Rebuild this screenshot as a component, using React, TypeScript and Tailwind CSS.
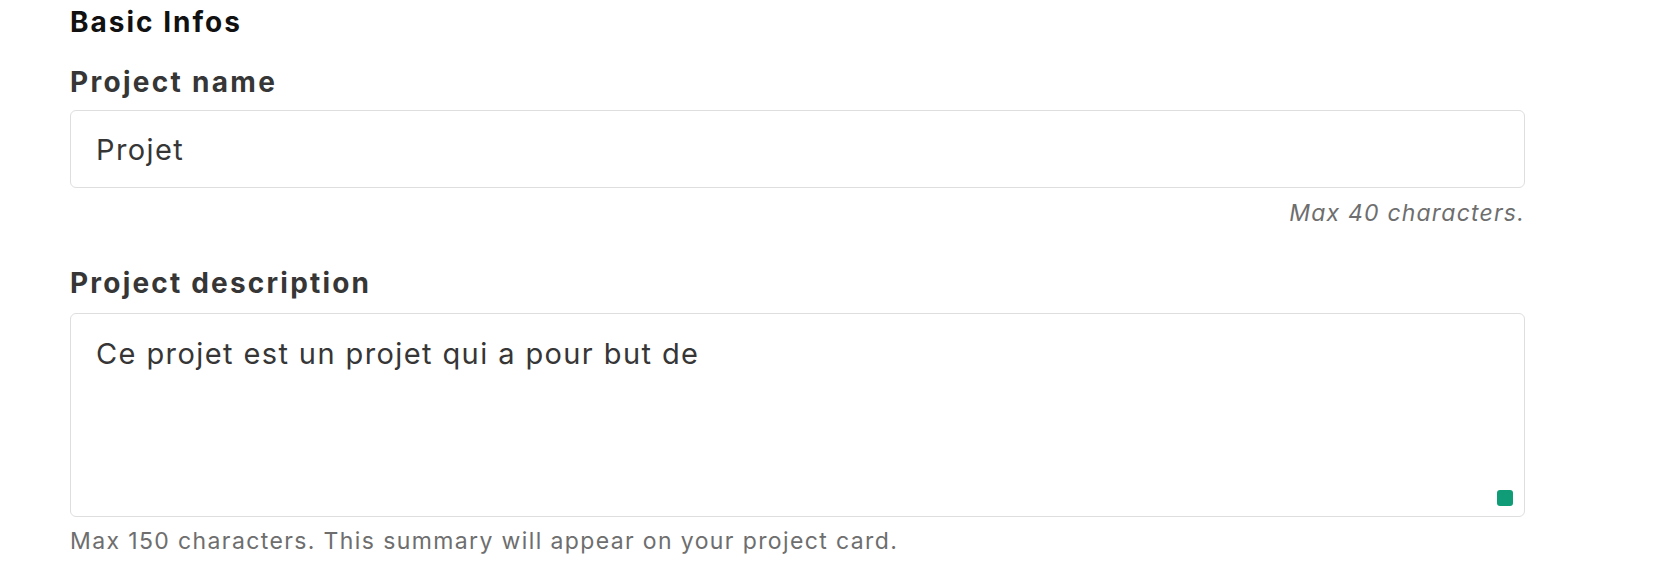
import React from "react";

export default function App() {
  return (
    <div className="min-h-[578px] w-full bg-white font-[family-name:Inter,sans-serif] pl-[70px]">
      <div className="w-[1455px] flex flex-col">
        <h2 className="pt-[6px] text-[28px] leading-[32px] font-bold tracking-[2px] text-[#111111]">Basic Infos</h2>

        <label className="mt-[28px] text-[28px] leading-[32px] font-bold tracking-[2.3px] text-[#363636]">Project name</label>
        <input
          className="mt-[12px] h-[78px] w-full rounded-[6px] border border-[#dedede] bg-white px-[25px] text-[29px] tracking-[1.4px] text-[#363636] outline-none"
          defaultValue="Projet"
        />
        <p className="mt-[11px] text-right text-[23px] leading-[28px] italic tracking-[1.2px] text-[#6e6e6e]">Max 40 characters.</p>

        <label className="mt-[40px] text-[28px] leading-[32px] font-bold tracking-[2.2px] text-[#363636]">Project description</label>
        <div className="relative mt-[14px]">
          <textarea
            className="block h-[204px] w-full resize-none rounded-[6px] border border-[#dedede] bg-white px-[25px] pt-[22px] text-[29px] leading-[35px] tracking-[1.4px] text-[#363636] outline-none"
            defaultValue="Ce projet est un projet qui a pour but de"
          />
          <span className="absolute right-[12px] bottom-[11px] h-[16px] w-[16px] rounded-[3px] bg-[#0f9c76]" />
        </div>
        <p className="mt-[10px] text-[23px] leading-[28px] tracking-[1.38px] text-[#6e6e6e]">
          Max 150 characters. This summary will appear on your project card.
        </p>
      </div>
    </div>
  );
}
